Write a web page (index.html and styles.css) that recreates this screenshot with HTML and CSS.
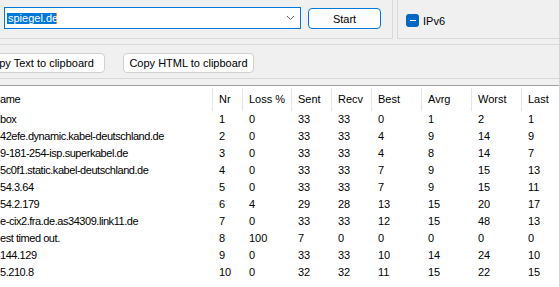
FILE: index.html
```html
<!DOCTYPE html>
<html lang="en">
<head>
    <meta charset="UTF-8">
    <meta name="viewport" content="width=device-width, initial-scale=1.0">
    <title>Trace Route</title>
    <link rel="stylesheet" href="styles.css">
</head>
<body>
    <div class="top">
        <div class="box box-host">
            <div class="combo">
                <span class="sel">spiegel.de</span>
                <svg class="chev" width="9" height="6" viewBox="0 0 9 6">
                    <path d="M1 1 L4.5 4.5 L8 1" fill="none" stroke="#606060" stroke-width="1"/>
                </svg>
            </div>
            <button type="button" class="btn btn-default">Start</button>
        </div>
        <div class="box box-opts">
            <label class="check"><span class="tick"></span>IPv6</label>
        </div>
    </div>

    <div class="box box-copy">
        <button type="button" class="btn btn-copy btn-first">Copy Text to clipboard</button>
        <button type="button" class="btn btn-copy">Copy HTML to clipboard</button>
    </div>

    <div class="list">
        <div class="row head">
            <div class="cell name">ame</div>
            <div class="cell">Nr</div>
            <div class="cell">Loss %</div>
            <div class="cell">Sent</div>
            <div class="cell">Recv</div>
            <div class="cell">Best</div>
            <div class="cell">Avrg</div>
            <div class="cell">Worst</div>
            <div class="cell">Last</div>
        </div>
        <div id="rows"></div>
    </div>

    <script>
        // hops as shown (host column is scrolled, so only the tail is visible)
        const hops = [
            ["box", 1, 0, 33, 33, 0, 1, 2, 1],
            ["42efe.dynamic.kabel-deutschland.de", 2, 0, 33, 33, 4, 9, 14, 9],
            ["9-181-254-isp.superkabel.de", 3, 0, 33, 33, 4, 8, 14, 7],
            ["5c0f1.static.kabel-deutschland.de", 4, 0, 33, 33, 7, 9, 15, 13],
            ["54.3.64", 5, 0, 33, 33, 7, 9, 15, 11],
            ["54.2.179", 6, 4, 29, 28, 13, 15, 20, 17],
            ["e-cix2.fra.de.as34309.link11.de", 7, 0, 33, 33, 12, 15, 48, 13],
            ["est timed out.", 8, 100, 7, 0, 0, 0, 0, 0],
            ["144.129", 9, 0, 33, 33, 10, 14, 24, 10],
            ["5.210.8", 10, 0, 32, 32, 11, 15, 22, 15]
        ];

        const rows = document.getElementById('rows');
        hops.forEach(hop => {
            const row = document.createElement('div');
            row.className = 'row';
            hop.forEach((value, i) => {
                const cell = document.createElement('div');
                cell.className = i === 0 ? 'cell name' : 'cell';
                cell.textContent = value;
                row.appendChild(cell);
            });
            rows.appendChild(row);
        });
    </script>
</body>
</html>
```

FILE: styles.css
```css
body {
    margin: 0;
    width: 559px;
    height: 287px;
    overflow: hidden;
    background: #f0f0f0;
    font-family: "Liberation Sans", Arial, sans-serif;
    font-size: 11px;
    color: #000;
}
.top {
    display: flex;
    gap: 4px;
    height: 39px;
}
.box {
    border: 0 solid #d9d9d9;
    box-sizing: border-box;
}
.box-host {
    width: 393px;
    border-right-width: 1px;
    border-bottom-width: 1px;
    display: flex;
    align-items: flex-start;
    padding-left: 4px;
}
.box-opts {
    flex: 1;
    border-left-width: 1px;
    border-bottom-width: 1px;
    padding: 14px 0 0 8px;
}
.combo {
    margin-top: 7px;
    width: 297px;
    height: 22px;
    box-sizing: border-box;
    border: 1px solid #0078d7;
    background: #fff;
    display: flex;
    align-items: center;
    justify-content: space-between;
    padding: 0 5px 0 2px;
}
.sel {
    background: #0078d7;
    color: #fff;
    line-height: 11px;
    padding: 0 0 0 1px;
    border-right: 1px solid #f08a24;
    width: 48px;
    white-space: nowrap;
}
.chev {
    display: block;
}
.btn {
    font-family: "Liberation Sans", Arial, sans-serif;
    font-size: 11px;
    color: #000;
    background: #fdfdfd;
    border: 1px solid #d0d0d0;
    border-radius: 4px;
    height: 20px;
    padding: 0;
    box-sizing: border-box;
}
.btn-default {
    margin: 8px 0 0 7px;
    width: 73px;
    height: 21px;
    border-color: #0078d7;
}
.check {
    display: flex;
    align-items: center;
    gap: 4px;
    height: 13px;
}
.tick {
    width: 13px;
    height: 13px;
    border-radius: 3px;
    background: #0067c0;
    display: flex;
    align-items: center;
    justify-content: center;
}
.tick::before {
    content: "";
    width: 6px;
    height: 1px;
    background: #fff;
}
.box-copy {
    margin-top: 5px;
    height: 35px;
    border-top-width: 1px;
    border-bottom-width: 1px;
    display: flex;
    gap: 18px;
    padding-top: 8px;
}
.btn-copy {
    width: 131px;
    flex: none;
}
.btn-first {
    margin-left: -26px;
}
.list {
    margin-top: 6px;
    border-top: 1px solid #a0a0a0;
    background: #fff;
    height: 202px;
    box-sizing: border-box;
    overflow: hidden;
}
.row {
    display: grid;
    grid-template-columns: 213px 30px 49px 40px 40px 50px 50px 50px 1fr;
    height: 17px;
    line-height: 17px;
}
.head {
    height: 25px;
    padding-top: 2px;
    box-sizing: border-box;
    line-height: 23px;
}
.cell {
    padding-left: 6px;
    white-space: nowrap;
    overflow: hidden;
}
.head .cell {
    border-right: 1px solid #e5e5e5;
}
.head .cell:last-child {
    border-right: 0;
}
.name {
    padding-left: 0;
    letter-spacing: -0.45px;
}
```
